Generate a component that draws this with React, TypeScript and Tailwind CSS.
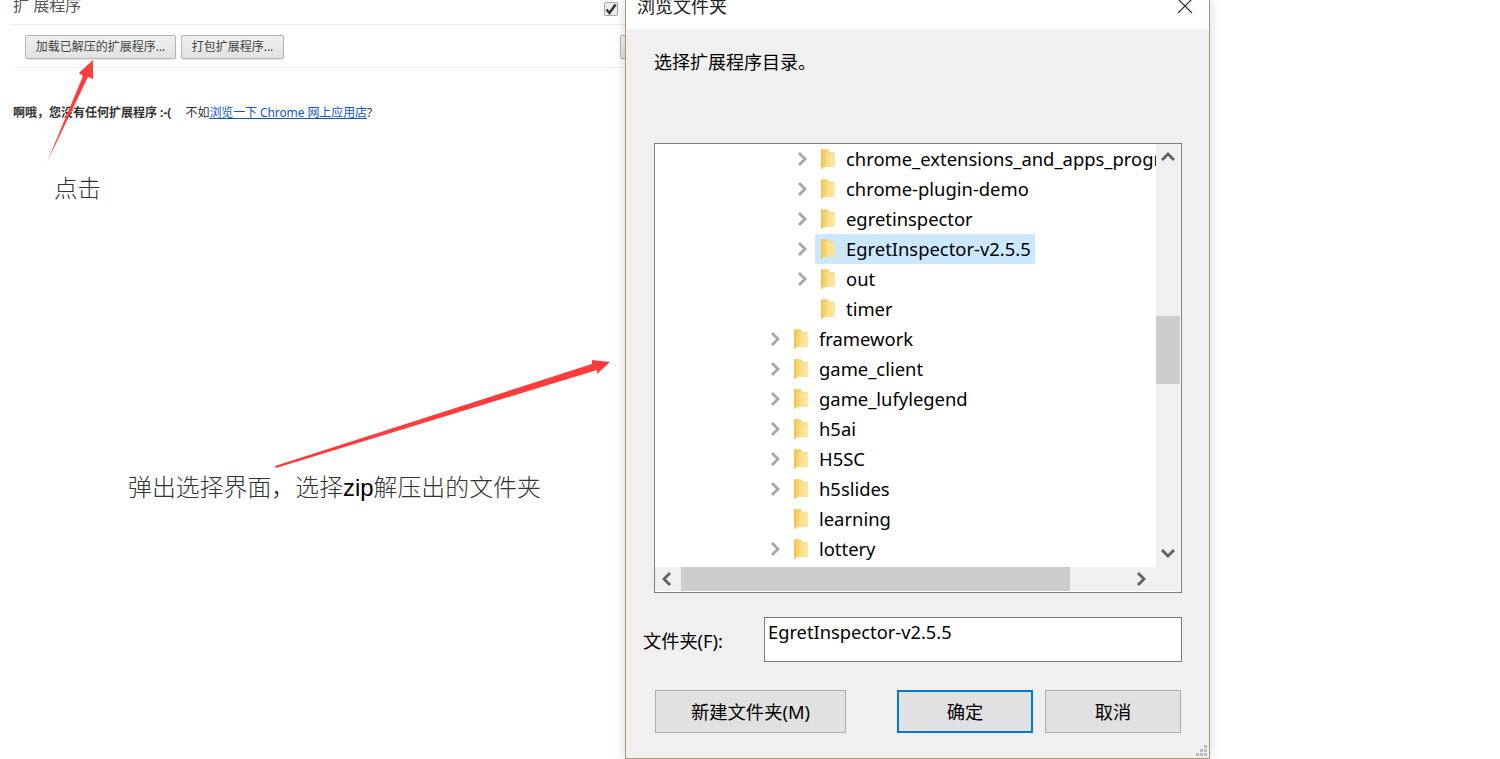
const cjk = "font-['Noto_Sans','Noto_Sans_CJK_SC',sans-serif]";

function Chevron({ dir = "right", className = "" }: { dir?: "right" | "left" | "up" | "down"; className?: string }) {
  const pts = {
    right: "3,1 9,7 3,13",
    left: "9,1 3,7 9,13",
    up: "1,9 7,3 13,9",
    down: "1,3 7,9 13,3",
  }[dir];
  return (
    <svg width="14" height="14" viewBox="0 0 14 14" className={className}>
      <polyline points={pts} fill="none" stroke="currentColor" strokeWidth="2.8" />
    </svg>
  );
}

function Folder() {
  return (
    <svg width="15" height="21" viewBox="0 0 15 21" className="shrink-0">
      <defs>
        <linearGradient id="fold" x1="0" y1="0" x2="1" y2="0.2">
          <stop offset="0" stopColor="#fad873" />
          <stop offset="1" stopColor="#fde69c" />
        </linearGradient>
      </defs>
      {/* back panel */}
      <path d="M1 0.5 L8 0.5 L9 3 L14.5 3 L14.5 18 L3 18 Z" fill="#f6cf6e" />
      {/* front flap */}
      <path d="M1 0.5 L7 0.5 L9.5 3 L9.5 3.5 L14.5 3.5 L14.5 18 L4 18 L1 20.5 Z" fill="url(#fold)" />
      <path d="M1 0.5 L3.5 0.5 L3.5 18 L1 20.5 Z" fill="#f1c45a" />
      <path d="M3.5 18 L3.5 0.5 L7 0.5 L9.5 3 L6 3.5 L6 18 Z" fill="#f7d06a" />
    </svg>
  );
}

const rows = [
  { name: "chrome_extensions_and_apps_programming", deep: true, arrow: true },
  { name: "chrome-plugin-demo", deep: true, arrow: true },
  { name: "egretinspector", deep: true, arrow: true },
  { name: "EgretInspector-v2.5.5", deep: true, arrow: true, selected: true },
  { name: "out", deep: true, arrow: true },
  { name: "timer", deep: true, arrow: false },
  { name: "framework", deep: false, arrow: true },
  { name: "game_client", deep: false, arrow: true },
  { name: "game_lufylegend", deep: false, arrow: true },
  { name: "h5ai", deep: false, arrow: true },
  { name: "H5SC", deep: false, arrow: true },
  { name: "h5slides", deep: false, arrow: true },
  { name: "learning", deep: false, arrow: false },
  { name: "lottery", deep: false, arrow: true },
];

function TreeRow({ row }: { row: (typeof rows)[number] }) {
  return (
    <div className={`flex h-[30px] items-center whitespace-nowrap ${row.deep ? "pl-[140px]" : "pl-[113px]"}`}>
      <div className="flex w-[20px] shrink-0 justify-start pl-px text-[#a6a6a6]">{row.arrow && <Chevron />}</div>
      <div className={`flex h-[30px] shrink-0 items-center pl-[5px] pr-[4px] ${row.selected ? "bg-[#cce8ff]" : ""}`}>
        <Folder />
        <span className="ml-[11px] text-[18.4px] text-[#000]">{row.name}</span>
      </div>
    </div>
  );
}

function TreeBox() {
  return (
    <div className="mx-[28px] mt-[67px] flex h-[450px] w-[528px] flex-col border border-[#7f7f7f] bg-white">
      <div className="flex h-[423px] min-h-0">
        <div className="w-[501px] overflow-hidden">
          {rows.map((r) => (
            <TreeRow key={r.name} row={r} />
          ))}
        </div>
        <div className="flex w-[24px] flex-col bg-[#f0f0f0] text-[#606060]">
          <div className="flex h-[28px] items-center justify-center"><Chevron dir="up" /></div>
          <div className="mt-[144px] h-[68px] bg-[#cdcdcd]" />
          <div className="mt-auto flex h-[26px] items-center justify-center"><Chevron dir="down" /></div>
        </div>
      </div>
      <div className="flex h-[24px] w-[525px] items-center bg-[#f0f0f0] text-[#606060]">
        <div className="flex w-[26px] items-center justify-center"><Chevron dir="left" /></div>
        <div className="h-[24px] w-[389px] bg-[#cdcdcd]" />
        <div className="ml-auto mr-[31px] flex items-center"><Chevron dir="right" /></div>
      </div>
    </div>
  );
}

function DialogButton({ label, className = "" }: { label: string; className?: string }) {
  return (
    <button className={`flex h-[43px] items-center justify-center bg-[#e1e1e1] text-[18.3px] text-[#000] ${className}`}>
      {label}
    </button>
  );
}

function Dialog() {
  return (
    <div className="absolute left-[625px] top-0 flex h-[759px] w-[585px] flex-col border-x border-b border-[#a89a70] bg-[#f0f0f0] shadow-[0_0_12px_rgba(0,0,0,0.16)]">
      <div className="flex h-[29px] items-start justify-between overflow-hidden bg-white pl-[11px] pr-[16px]">
        <span className="-mt-[7px] text-[18px] text-[#222]">浏览文件夹</span>
        <svg width="16" height="16" viewBox="0 0 16 16" className="-mt-px text-[#333]">
          <path d="M1 0 L15 14 M15 0 L1 14" stroke="currentColor" strokeWidth="1.2" />
        </svg>
      </div>
      <div className="pl-[28px] pt-[20px] text-[18px] leading-[27px] text-[#000]">选择扩展程序目录。</div>
      <TreeBox />
      <div className="mt-[24px] flex h-[45px] items-center pl-[17px] pr-[27px]">
        <span className="mt-[4px] w-[121px] text-[18.2px] text-[#000]">文件夹(F):</span>
        <div className="h-[45px] w-[418px] border border-[#7a7a7a] bg-white pl-[3px] text-[18.3px] leading-[28px] text-[#000]">
          EgretInspector-v2.5.5
        </div>
      </div>
      <div className="mt-[28px] flex pl-[29px]">
        <DialogButton label="新建文件夹(M)" className="w-[191px] border border-[#adadad]" />
        <DialogButton label="确定" className="ml-[51px] w-[136px] border-2 border-[#0078d7]" />
        <DialogButton label="取消" className="ml-[12px] w-[136px] border border-[#adadad]" />
      </div>
      <svg width="12" height="12" viewBox="0 0 12 12" className="absolute bottom-[1px] right-[1px] text-[#bdbdbd]">
        <path d="M8 0h3v3H8zM4 4h3v3H4zM8 4h3v3H8zM0 8h3v3H0zM4 8h3v3H4zM8 8h3v3H8z" fill="currentColor" />
      </svg>
    </div>
  );
}

function PageButton({ label, className = "" }: { label: string; className?: string }) {
  return (
    <button className={`h-[24px] shrink-0 whitespace-nowrap rounded-[2px] border border-[#b5b5b5] bg-gradient-to-b from-[#f0f0f0] to-[#e2e2e2] text-[12px] text-[#444] shadow-[0_1px_0_rgba(0,0,0,0.08)] ${className}`}>
      {label}
    </button>
  );
}

function ExtensionsPage() {
  return (
    <div className="w-[625px] overflow-hidden pl-[11px] text-[12px]">
      <div className="flex h-[25px] items-start justify-between border-b border-[#eeeeee]">
        <span className="-mt-[7px] pl-[2px] text-[16px] text-[#555]">扩 展程序</span>
        <div className="mr-[7px] mt-[2px] flex h-[14px] w-[14px] items-center justify-center rounded-[2px] border border-[#a8a8a8] bg-[#ececec]">
          <svg width="12" height="12" viewBox="0 0 12 12">
            <path d="M1.5 6.5 L4.5 10 L10.5 1.5" fill="none" stroke="#333" strokeWidth="2.4" />
          </svg>
        </div>
      </div>
      <div className="flex h-[43px] items-start gap-[5px] border-b border-[#eeeeee] pl-[14px] pt-[10px]">
        <PageButton label="加载已解压的扩展程序..." className="w-[151px]" />
        <PageButton label="打包扩展程序..." className="w-[103px]" />
        <PageButton label="" className="ml-[331px] w-[40px]" />
      </div>
      <div className="mt-[36px] flex h-[18px] items-center whitespace-nowrap pl-[2px] text-[#333]">
        <span className="pr-[2px] font-bold">啊哦，您没有任何扩展程序 :-(</span>
        <span className="ml-[12px]">不如</span>
        <a className="tracking-[-0.1px] text-[#1155cc] underline">浏览一下 Chrome 网上应用店</a>
        <span>?</span>
      </div>
    </div>
  );
}

function Annotations() {
  return (
    <>
      <svg width="625" height="500" viewBox="0 0 625 500" className="pointer-events-none absolute left-0 top-0">
        <polygon points="47,162 83,76 79,73 93,60 93,79 88,77" fill="#ff3b3b" />
        <polygon points="275,466 592,364 592,360 610,362 597,374 597,370 276,468" fill="#ff3b3b" />
      </svg>
      <div className="absolute left-[54px] top-[173px] text-[23.5px] font-light leading-[30px] text-[#333]">点击</div>
      <div className="absolute left-[128px] top-[472px] whitespace-nowrap text-[23.9px] font-light leading-[30px] text-[#333]">
        弹出选择界面，选择<span className="font-['Liberation_Sans',sans-serif] text-[#000]">zip</span>解压出的文件夹
      </div>
    </>
  );
}

export default function App() {
  return (
    <div className={`relative h-[759px] w-[1500px] overflow-hidden bg-white ${cjk}`}>
      <ExtensionsPage />
      <Annotations />
      <Dialog />
    </div>
  );
}
